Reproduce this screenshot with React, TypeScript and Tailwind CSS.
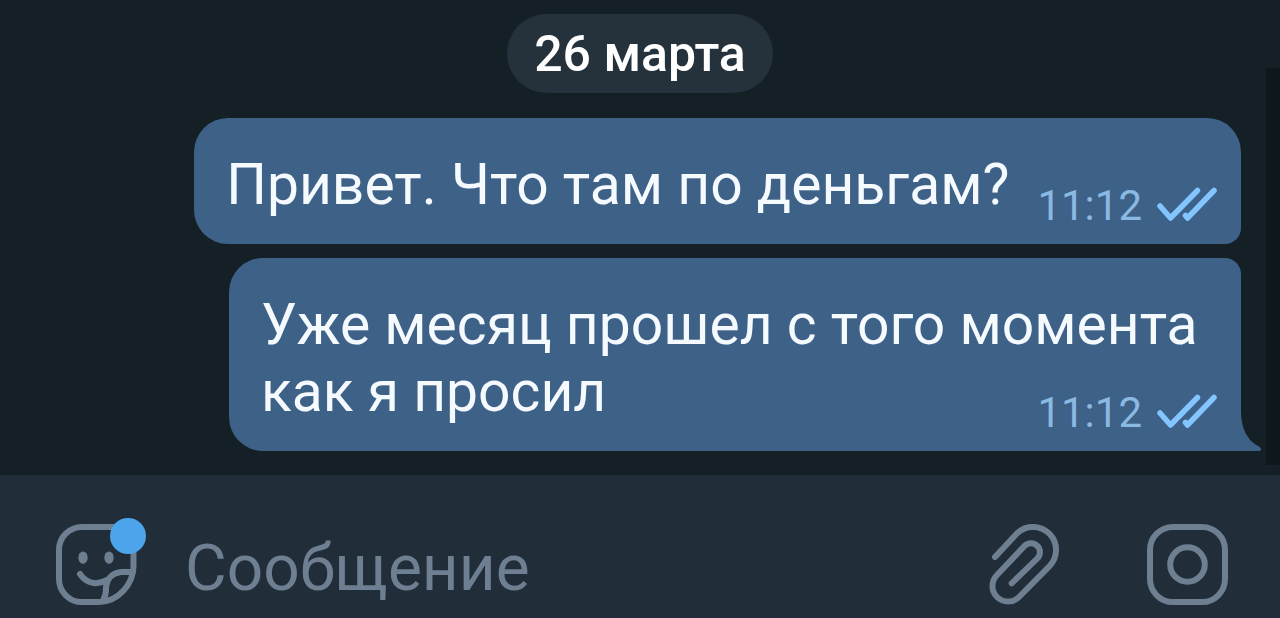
import type { ReactNode } from "react";

function ReadTicks() {
  return (
    <svg viewBox="0 0 60 38" className="h-[38px] w-[60px]" fill="none" stroke="#83c5ff" strokeWidth="5.5" strokeLinecap="round" strokeLinejoin="round" role="img" aria-label="Прочитано">
      <path d="M3 19 13.500 31 40.500 3.500" />
      <path d="M28.500 28.500 30.500 31 57 3.500" />
    </svg>
  );
}

function BubbleTail() {
  return (
    <svg viewBox="0 0 21 48" className="absolute bottom-0 left-full h-12 w-[21px]" fill="#3e6188" aria-hidden="true">
      <path d="M0 0V8C0 25 6 38 18 43.500Q21.500 45.500 19 48H0Z" />
    </svg>
  );
}

type BubbleProps = { time: string; last?: boolean; children: ReactNode };

function Bubble({ time, last = false, children }: BubbleProps) {
  const corners = last ? "max-w-[1012px] rounded-l-[34px] rounded-tr-2xl" : "rounded-[34px] rounded-br-2xl";
  return (
    <li className={`relative flow-root bg-[#3e6188] pt-[33px] pr-6 pb-[13px] pl-8 text-[57px] leading-[67px] text-[#f5faff] ${corners}`}>
      {children}
      <span className="float-right mt-[30px] ml-7 flex items-center gap-[15px] text-[42px] leading-[50px] text-[#8ab9e2]">
        <time>{time}</time>
        <ReadTicks />
      </span>
      {last && <BubbleTail />}
    </li>
  );
}

function StickerIcon() {
  return (
    <svg viewBox="26 24 81 81" className="size-[81px] overflow-visible" fill="none" stroke="currentColor" strokeWidth="6" strokeLinecap="round" strokeLinejoin="round" aria-hidden="true">
      <path d="M103.500 50V66C103.500 84 88 102 69 102H52A23 23 0 0 1 29 79V50A23 23 0 0 1 52 27H85" />
      <path d="M102 72H91C82 73 77 79 76 87Q76.500 94 73 101" />
      <path d="M50 74C56 83 66 86 77 80" />
      <ellipse cx="53" cy="57.700" rx="4.700" ry="6.200" fill="currentColor" stroke="none" />
      <ellipse cx="79" cy="57.700" rx="4.700" ry="6.200" fill="currentColor" stroke="none" />
      <circle cx="98" cy="36" r="18" fill="#4ca5ea" stroke="none" />
    </svg>
  );
}

function ClipIcon() {
  return (
    <svg viewBox="19 24 71 81" className="h-[81px] w-[71px]" fill="none" stroke="currentColor" strokeWidth="6" strokeLinecap="round" strokeLinejoin="round" aria-hidden="true">
      <path d="M25 57 46.700 33.700A23 23 0 0 1 79.300 66.300L49 97A15.500 15.500 0 0 1 27 75L54.600 45.900A8.900 8.900 0 0 1 67.400 58.400L41.700 83.300" />
    </svg>
  );
}

function CameraIcon() {
  return (
    <svg viewBox="0 0 81 81" className="size-[81px]" fill="none" stroke="currentColor" strokeWidth="6" aria-hidden="true">
      <rect x="3" y="3" width="75" height="75" rx="23" />
      <circle cx="40.500" cy="40.500" r="17.300" />
    </svg>
  );
}

export default function App() {
  return (
    <div className="relative flex min-h-screen flex-col bg-[#141f26] font-[Roboto,sans-serif]">
      <main className="flex flex-1 flex-col px-[39px] pt-[14px] pb-6">
        <h2 className="self-center rounded-full bg-[#25323b] px-[27px] pt-[13px] pb-[11px] text-[50px] leading-[55px] font-medium text-white">26 марта</h2>
        <ul className="mt-[25px] flex flex-col items-end gap-[14px]">
          <Bubble time="11:12">Привет. Что там по деньгам?</Bubble>
          <Bubble time="11:12" last>Уже месяц прошел с того момента как я просил</Bubble>
        </ul>
      </main>
      <div className="absolute top-[68px] right-0 h-[397px] w-[14px] bg-[#0e171c]" aria-hidden="true" />
      <form className="flex items-center bg-[#212d39] pt-[49px] pr-[52px] pb-[13px] pl-14 text-[#6d7f91]">
        <button type="button" aria-label="Стикеры">
          <StickerIcon />
        </button>
        <input type="text" aria-label="Сообщение" placeholder="Сообщение" className="ml-12 h-[81px] min-w-0 flex-1 bg-transparent pt-2 text-[64px] text-white outline-none placeholder:text-[#6d7f91]" />
        <button type="button" aria-label="Прикрепить файл">
          <ClipIcon />
        </button>
        <button type="button" aria-label="Камера" className="ml-[87px]">
          <CameraIcon />
        </button>
      </form>
    </div>
  );
}
